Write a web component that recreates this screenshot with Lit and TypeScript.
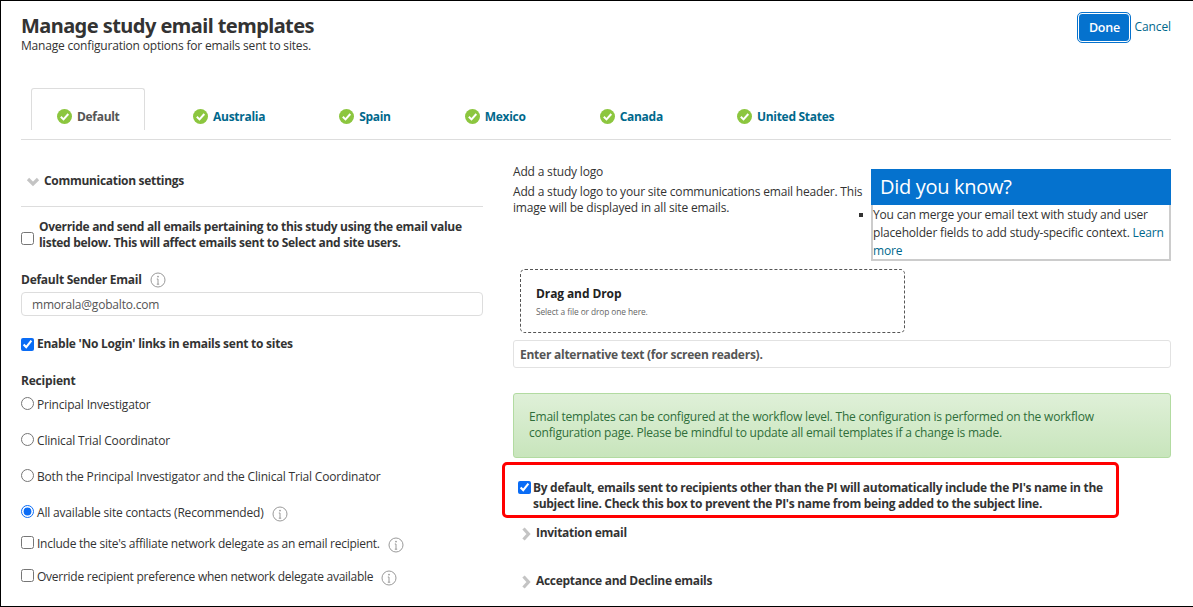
import { LitElement, html, css } from "lit";
import { customElement } from "lit/decorators.js";

const check = html`<svg class="ok" viewBox="0 0 15 15" width="15" height="15"><circle cx="7.5" cy="7.5" r="7.5" fill="#8cc63f"/><path d="M3.8 7.8l2.7 2.6 4.8-5.4" fill="none" stroke="#fff" stroke-width="2"/></svg>`;
const info = html`<svg class="info" viewBox="0 0 16 16" width="16" height="16"><circle cx="8" cy="8" r="7" fill="none" stroke="#9a9a9a" stroke-width="1"/><path d="M8 7v5.2M6.8 7h1.2M6.8 12.2h2.4" fill="none" stroke="#9a9a9a"/><circle cx="8" cy="4.6" r=".9" fill="#9a9a9a"/></svg>`;
const chevDown = html`<svg class="chev down" viewBox="0 0 14 10" width="14" height="10"><path d="M2 2l5 5 5-5" fill="none" stroke="#c4c4c4" stroke-width="3.2"/></svg>`;
const chevRight = html`<svg class="chev" viewBox="0 0 9 14" width="9" height="14"><path d="M1.5 1.5L6.5 7l-5 5.5" fill="none" stroke="#c4c4c4" stroke-width="3.2"/></svg>`;

const tabs = ["Default", "Australia", "Spain", "Mexico", "Canada", "United States"];

@customElement("app-root")
export class AppRoot extends LitElement {
  static styles = css`
    :host { display: block; width: 1193px; height: 607px; box-sizing: border-box; border: solid #000; border-width: 1px 0 1px 1px; overflow: hidden; background: #fff; font-family: "Open Sans", "Noto Sans", sans-serif; font-size: 12px; color: #333; letter-spacing: -0.18px; }
    input[type="checkbox"], input[type="radio"] { width: 13px; height: 13px; margin: 0; flex: none; accent-color: #0a6cf5; }
    .page { padding: 0 22px 0 20px; }
    header { display: flex; justify-content: space-between; height: 87px; }
    h1 { margin: 13px 0 0; font: 700 20px/24px "Noto Sans", sans-serif; letter-spacing: -0.55px; color: #333; }
    .sub { margin: 0; font-size: 12px; line-height: 16px; letter-spacing: -0.19px; }
    .actions { display: flex; align-items: flex-start; gap: 4px; margin-top: 12px; }
    .done { width: 52px; height: 29px; margin: 0; padding: 0; background: #0572ce; color: #fff; border: 1px solid #fff; outline: 1px solid #0572ce; border-radius: 4px; font: 600 12.5px "Open Sans", sans-serif; letter-spacing: -0.2px; }
    .cancel { color: #00688c; margin-top: 5px; letter-spacing: -0.1px; }
    .tabs { display: flex; padding-left: 10px; gap: 22px; height: 51px; border-bottom: 1px solid #ddd; }
    .tab { display: flex; align-items: center; gap: 5px; height: 42px; box-sizing: border-box; padding: 14px 26px 0; font-weight: 700; color: #00688c; letter-spacing: -0.28px; }
    .tab.active { color: #555; border: 1px solid #ddd; border-bottom: 0; border-radius: 3px 3px 0 0; padding: 14px 24.5px 0 25px; background: #fff; letter-spacing: -0.3px; }
    .cols { display: flex; gap: 30px; }
    .left { width: 462px; flex: none; }
    .right { flex: 1; min-width: 0; }
    .acc { display: flex; align-items: center; gap: 4px; font-weight: 700; letter-spacing: -0.3px; }
    .comm { height: 67px; box-sizing: border-box; padding: 14px 0 0 5px; border-bottom: 1px solid #ddd; }
    .down { margin-top: 3px; }
    .override { display: flex; align-items: flex-start; gap: 5px; font-weight: 700; line-height: 16px; margin: 12px 0 21px; letter-spacing: -0.3px; }
    .override input[type="checkbox"] { margin-top: 13px; }
    .label { display: flex; align-items: center; gap: 8px; font-weight: 700; line-height: 16px; letter-spacing: -0.25px; }
    .email { height: 24px; box-sizing: border-box; margin-top: 4px; border: 1px solid #ddd; border-radius: 4px; padding: 0 10px; display: flex; align-items: center; color: #555; font-size: 12px; letter-spacing: -0.2px; }
    .row { display: flex; align-items: center; gap: 3px; line-height: 16px; }
    .row.bold { font-weight: 700; margin-top: 20px; letter-spacing: -0.25px; }
    .rec { margin-top: 21px; margin-bottom: 7px; font-weight: 700; line-height: 16px; letter-spacing: -0.2px; }
    .radios { display: flex; flex-direction: column; }
    .radios .row { height: 36px; align-items: flex-start; padding-top: 1px; box-sizing: border-box; }
    .radios .info { margin-left: 5px; margin-top: 1px; }
    .checks { margin-top: -4px; letter-spacing: -0.26px; }
    .checks .row { height: 33px; align-items: flex-start; box-sizing: border-box; }
    .checks .info { margin-left: 5px; margin-top: 1px; }
    .top { display: flex; height: 121px; }
    .logo { width: 358px; flex: none; padding-top: 24px; line-height: 16px; }
    .logo p { margin: 0 0 4px; }
    .know { width: 300px; margin-top: 29px; flex: none; height: 92px; position: relative; box-sizing: border-box; border: solid #ccc; border-width: 0 2px 2px 2px; }
    .know h3 { margin: 0 -2px; height: 36px; background: #0572ce; color: #fff; font: 400 20px/36px "Open Sans", sans-serif; padding-left: 9px; letter-spacing: -0.3px; }
    .know div { line-height: 18px; padding: 1px 0 0 0; }
    .know a { color: #00688c; }
    .bullet { position: absolute; left: -14px; top: 44px; width: 4px; height: 4px; background: #333; }
    .drop { width: 385px; height: 64px; box-sizing: border-box; margin: 8px 0 0 7px; border: 1px dashed #555; border-radius: 5px; padding: 16px 15px 0; }
    .drop b { display: block; font-size: 12px; line-height: 16px; color: #222; letter-spacing: -0.1px; }
    .drop small { display: block; font-size: 8.4px; line-height: 12px; color: #666; letter-spacing: -0.1px; margin-top: 4px; }
    .alt { height: 28px; box-sizing: border-box; margin-top: 7px; border: 1px solid #e2e2e2; border-radius: 3px; padding: 0 6px; display: flex; align-items: center; font-weight: 700; color: #555; letter-spacing: -0.25px; }
    .alert { height: 65px; box-sizing: border-box; margin-top: 25px; padding: 15px 12px 0 15px; border: 1px solid #b2dba1; border-radius: 3px; background: linear-gradient(#dff0d8, #c8e5bc); color: #2f6e3a; line-height: 16px; letter-spacing: -0.2px; }
    .pi { display: flex; align-items: flex-start; gap: 2px; width: 617px; height: 56px; box-sizing: border-box; margin: 4px 0 0 -11px; padding: 15px 10px 0 13px; border: 3px solid #f00; border-radius: 5px; font-weight: 700; line-height: 16px; letter-spacing: -0.3px; }
    .pi input[type="checkbox"] { margin-top: 1px; }
    .sect { padding-left: 9px; height: 48px; font-weight: 700; align-items: flex-start; gap: 5px; }
    .sect .chev { margin-top: 3px; }
    .first { margin-top: 6px; }
  `;

  render() {
    return html`<div class="page">
      <header>
        <div><h1>Manage study email templates</h1><p class="sub">Manage configuration options for emails sent to sites.</p></div>
        <div class="actions"><button class="done">Done</button><span class="cancel">Cancel</span></div>
      </header>
      <nav class="tabs">${tabs.map((t, i) => html`<div class="tab ${i === 0 ? "active" : ""}">${check}<span>${t}</span></div>`)}</nav>
      <div class="cols">
        <section class="left">
          <div class="acc comm">${chevDown}<span>Communication settings</span></div>
          <label class="override"><input type="checkbox" /><span>Override and send all emails pertaining to this study using the email value listed below. This will affect emails sent to Select and site users.</span></label>
          <div class="label">Default Sender Email ${info}</div>
          <div class="email">mmorala@gobalto.com</div>
          <label class="row bold"><input type="checkbox" checked /><span>Enable 'No Login' links in emails sent to sites</span></label>
          <div class="rec">Recipient</div>
          <div class="radios">
            <label class="row"><input type="radio" name="r" /><span>Principal Investigator</span></label>
            <label class="row"><input type="radio" name="r" /><span>Clinical Trial Coordinator</span></label>
            <label class="row"><input type="radio" name="r" /><span>Both the Principal Investigator and the Clinical Trial Coordinator</span></label>
            <label class="row"><input type="radio" name="r" checked /><span>All available site contacts (Recommended)</span>${info}</label>
          </div>
          <div class="checks">
            <label class="row"><input type="checkbox" /><span>Include the site's affiliate network delegate as an email recipient.</span>${info}</label>
            <label class="row"><input type="checkbox" /><span>Override recipient preference when network delegate available</span>${info}</label>
          </div>
        </section>
        <section class="right">
          <div class="top">
            <div class="logo"><p>Add a study logo</p><p>Add a study logo to your site communications email header. This image will be displayed in all site emails.</p></div>
            <div class="know"><span class="bullet"></span><h3>Did you know?</h3><div>You can merge your email text with study and user placeholder fields to add study-specific context. <a>Learn more</a></div></div>
          </div>
          <div class="drop"><b>Drag and Drop</b><small>Select a file or drop one here.</small></div>
          <div class="alt">Enter alternative text (for screen readers).</div>
          <div class="alert">Email templates can be configured at the workflow level. The configuration is performed on the workflow configuration page. Please be mindful to update all email templates if a change is made.</div>
          <label class="pi"><input type="checkbox" checked /><span>By default, emails sent to recipients other than the PI will automatically include the PI's name in the subject line. Check this box to prevent the PI's name from being added to the subject line.</span></label>
          <div class="acc sect first">${chevRight}<span>Invitation email</span></div>
          <div class="acc sect">${chevRight}<span>Acceptance and Decline emails</span></div>
        </section>
      </div>
    </div>`;
  }
}
